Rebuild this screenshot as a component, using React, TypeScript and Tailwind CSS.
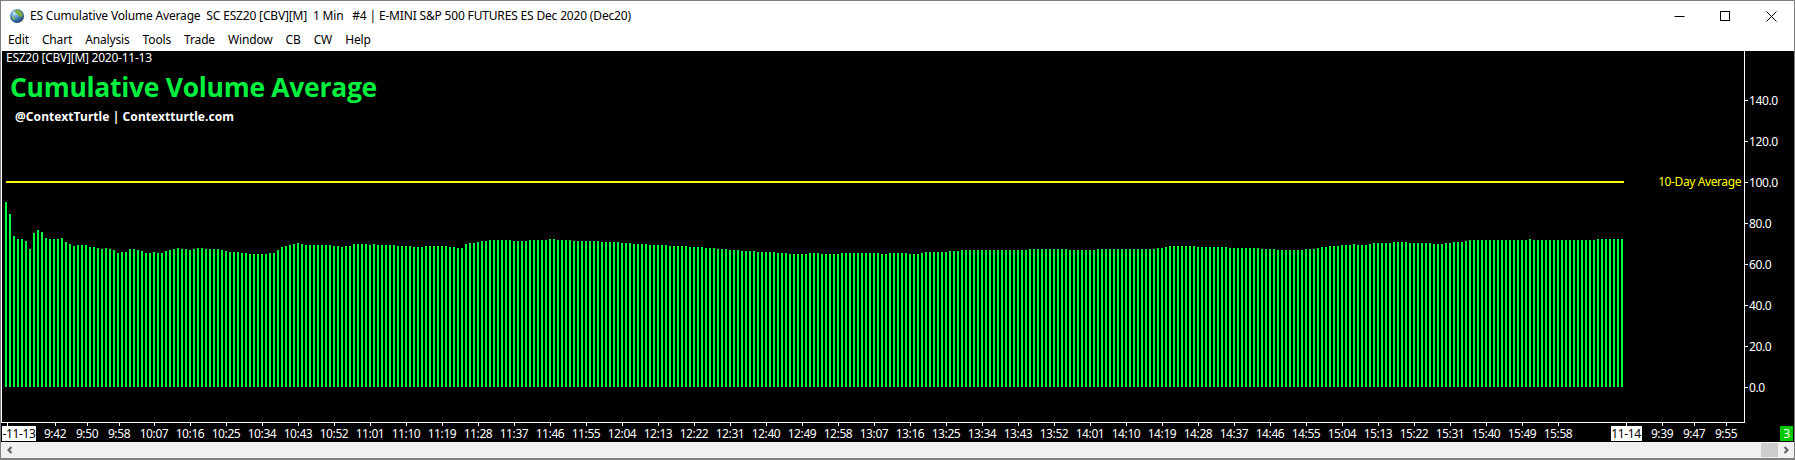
import React from "react";

// run-length encoded bar tops, [y offset, count] per visible strip
const firstTops = [12,24,46,49,49,51,59,43,40,42,48,49,49,49,48,52,54,56,55,55,55,57,57,58,59,58,59,60,63,62,62,59,59,60,61,63,63,62,63,63,61,60,59,58,59,59,60,59,58];
const restRuns: number[][] = [
  [23,1],[24,4],[25,1],[26,1],[27,3],[28,2],[29,5],[28,2],[25,1],[22,1],[21,1],[20,1],[19,1],[18,1],
  [19,1],[20,7],[21,2],[22,1],[21,2],[19,4],[20,1],[19,1],[20,5],[21,4],[22,3],[21,6],[22,2],[23,2],
  [19,1],[18,2],[17,1],[16,2],[15,6],[16,4],[15,5],[14,2],[15,1],
  [15,3],[16,7],[17,5],[18,3],[19,4],[20,5],[21,5],[22,4],[23,3],[24,3],[25,3],[26,4],[27,5],[28,3],[29,5],[28,3],[29,5],[28,10],[29,2],[28,5],[29,3],
  [28,1],[27,6],[26,3],[25,17],[24,10],[25,7],[24,15],[23,2],[22,1],[21,7],[22,8],[23,8],[24,4],[25,1],
  [25,6],[24,3],[23,1],[22,2],[21,3],[20,3],[19,1],[20,3],[19,1],[18,5],[17,4],[18,6],[19,3],[18,2],[17,3],[16,1],[15,15],[14,1],[15,16],[14,7],
];

const barTops: number[] = [
  ...firstTops.map((t) => 190 + t),
  ...restRuns.flatMap(([t, n]) => Array.from({ length: n }, () => 225 + t)),
];

const yLabels = [
  { y: 100, label: "140.0" },
  { y: 141, label: "120.0" },
  { y: 182, label: "100.0" },
  { y: 223, label: "80.0" },
  { y: 264, label: "60.0" },
  { y: 305, label: "40.0" },
  { y: 346, label: "20.0" },
  { y: 387, label: "0.0" },
];

const timeLabel = (mins: number) => `${Math.floor(mins / 60)}:${String(mins % 60).padStart(2, "0")}`;

const xLabels = [
  { x: 55, label: "9:42" },
  { x: 87, label: "9:50" },
  { x: 119, label: "9:58" },
  ...Array.from({ length: 40 }, (_, i) => ({ x: 154 + 36 * i, label: timeLabel(607 + 9 * i) })),
  { x: 1662, label: "9:39" },
  { x: 1694, label: "9:47" },
  { x: 1726, label: "9:55" },
];

const menu = ["Edit", "Chart", "Analysis", "Tools", "Trade", "Window", "CB", "CW", "Help"];

function Globe() {
  return (
    <svg width="14" height="14" viewBox="0 0 14 14" className="shrink-0">
      <defs>
        <radialGradient id="globe" cx="35%" cy="30%" r="75%">
          <stop offset="0%" stopColor="#cfe6f5" />
          <stop offset="45%" stopColor="#4f8fc4" />
          <stop offset="100%" stopColor="#1c3f6e" />
        </radialGradient>
      </defs>
      <circle cx="7" cy="7" r="7" fill="url(#globe)" />
      <path d="M5 1.500c2-1 5-.5 6.500 1.500 1 1.500 1.300 3.500.5 5-1 .5-2 0-2.500-1-.8-.3-1.500-1-1.500-2-1 0-2-.7-3-1.500z" fill="#7fae3c" />
      <path d="M2 7c1 0 2 .5 2.500 1.500L5 11c-1 .5-2-1-2.500-2z" fill="#8fb84a" />
    </svg>
  );
}

function WindowButtons() {
  return (
    <div className="flex items-center ml-auto">
      <svg width="11" height="11" viewBox="0 0 11 11" className="mr-[35px]">
        <rect x="0.500" y="5" width="10" height="1" fill="#000" />
      </svg>
      <svg width="11" height="11" viewBox="0 0 11 11" className="mr-[35px]">
        <rect x="0.500" y="0.500" width="9" height="9" fill="none" stroke="#000" />
      </svg>
      <svg width="11" height="11" viewBox="0 0 11 11" className="mr-[17px]">
        <path d="M0.500 0.500L10.500 10.500M10.500 0.500L0.500 10.500" stroke="#000" strokeWidth="1" />
      </svg>
    </div>
  );
}

function Plot() {
  const axisText = "font-['Noto_Sans',sans-serif] text-[12px] tracking-[-0.4px]";
  return (
    <svg width="1793" height="391" viewBox="1 51 1793 391" className="block">
      <rect x="1" y="51" width="1" height="372" fill="#fff" />
      <rect x="1744" y="51" width="1" height="372" fill="#fff" />
      <rect x="1" y="422" width="1744" height="1" fill="#fff" />

      <rect x="6" y="181" width="1618" height="2" fill="#ffff00" />
      <text x="1741" y="186" textAnchor="end" className={`${axisText} fill-[#ffff00]`}>10-Day Average</text>

      {barTops.map((top, k) => (
        <rect key={k} x={5 + 4 * k} y={top} width="2" height={387 - top} fill="#00ff40" />
      ))}

      {yLabels.map((t) => (
        <g key={t.label}>
          <rect x="1745" y={t.y} width="3" height="1" fill="#fff" />
          <text x="1749" y={t.y + 5} className={`${axisText} fill-white`}>{t.label}</text>
        </g>
      ))}

      <rect x="7" y="423" width="1" height="3" fill="#fff" />
      {xLabels.map((t) => (
        <g key={t.label + t.x}>
          <rect x={t.x} y="423" width="1" height="3" fill="#fff" />
          <text x={t.x} y="438" textAnchor="middle" className={`${axisText} fill-white`}>{t.label}</text>
        </g>
      ))}
      <rect x="1626" y="423" width="1" height="3" fill="#fff" />

      <rect x="2" y="426" width="34" height="15" fill="#fff" />
      <text x="19" y="438" textAnchor="middle" className={`${axisText} fill-black`}>-11-13</text>
      <rect x="1611" y="426" width="31" height="15" fill="#fff" />
      <text x="1626" y="438" textAnchor="middle" className={`${axisText} fill-black`}>11-14</text>
      <rect x="1780" y="426" width="13" height="15" fill="#00c800" />
      <text x="1786.500" y="438" textAnchor="middle" className={`${axisText} fill-white`}>3</text>
    </svg>
  );
}

export default function App() {
  return (
    <div className="w-[1795px] h-[460px] flex flex-col bg-white border border-[#7f7f7f] border-b-2 overflow-hidden font-['Noto_Sans',sans-serif] text-[12px] text-black">
      <div className="h-[26px] flex items-center pl-[9px] pt-[4px]">
        <Globe />
        <span className="ml-[6px] whitespace-pre tracking-[-0.17px]">ES Cumulative Volume Average  SC ESZ20 [CBV][M]  1 Min   #4 | E-MINI S&amp;P 500 FUTURES ES Dec 2020 (Dec20)</span>
        <WindowButtons />
      </div>
      <div className="h-[23px] flex items-center gap-[13px] pl-[7px] pt-[3px] tracking-[-0.15px]">
        {menu.map((m) => (
          <span key={m}>{m}</span>
        ))}
      </div>
      <div className="mt-[1px] relative bg-black">
        <Plot />
        <div className="absolute left-[5px] top-[-2px] text-white text-[12px] tracking-[-0.25px]">ESZ20 [CBV][M] 2020-11-13</div>
        <div className="absolute left-[9px] top-[19px] text-[#00f040] text-[26.5px] leading-[34px] font-bold font-['Open_Sans',sans-serif] tracking-[-0.3px]">Cumulative Volume Average</div>
        <div className="absolute left-[14px] top-[58px] text-white text-[12px] leading-[16px] font-bold tracking-[0.07px]">@ContextTurtle | Contextturtle.com</div>
      </div>
      <div className="flex-1 bg-[#f0f0f0] flex items-center justify-between">
        <svg width="16" height="16" viewBox="0 0 16 16" className="ml-[1px]">
          <path d="M9.500 5L6.500 8l3 3" fill="none" stroke="#606060" strokeWidth="2" />
        </svg>
        <div className="flex items-center h-full">
          <div className="w-[17px] h-[14px] bg-[#cdcdcd]" />
          <svg width="16" height="16" viewBox="0 0 16 16">
            <path d="M6.500 5l3 3-3 3" fill="none" stroke="#606060" strokeWidth="2" />
          </svg>
        </div>
      </div>
    </div>
  );
}
